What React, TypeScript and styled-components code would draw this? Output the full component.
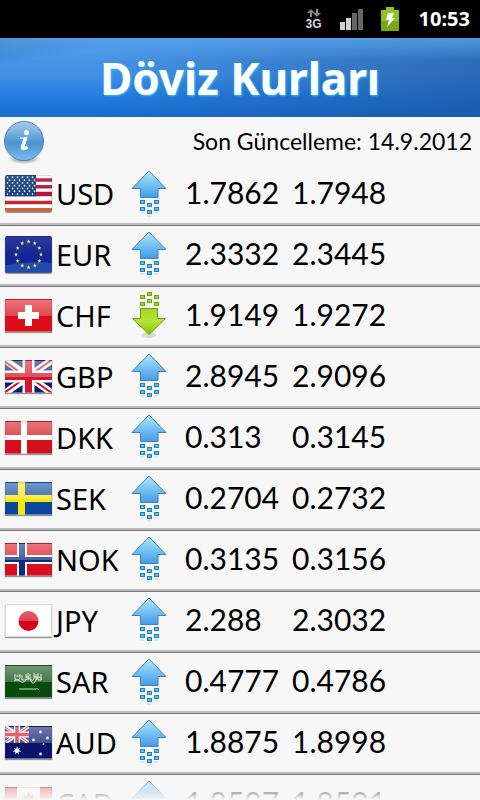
import React, { useId } from "react";
import styled, { createGlobalStyle } from "styled-components";

const GlobalStyle = createGlobalStyle`
  *, *::before, *::after { box-sizing: border-box; }
  body { margin: 0; background: #f7f7f7; color: #000; }
`;

const Screen = styled.div`
  display: flex;
  flex-direction: column;
  height: 100vh;
  overflow: hidden;
  background: #f7f7f7;
`;

const StatusBar = styled.div`
  display: flex;
  flex: none;
  align-items: center;
  justify-content: flex-end;
  height: 38px;
  padding-right: 10px;
  background: #000;
  color: #fff;
`;

const Network = styled.div`
  display: flex;
  flex-direction: column;
  align-items: center;
  width: 16px;
  margin-right: 18px;
  color: #d6d6d6;
  font: bold 12px/12px "Liberation Sans", sans-serif;
`;

const Signal = styled.svg`
  margin-right: 17px;
`;

const Battery = styled.svg`
  margin-right: 20px;
`;

const Clock = styled.time`
  font: bold 20px/38px "Noto Sans", "Open Sans", sans-serif;
`;

const Header = styled.header`
  flex: none;
  height: 79px;
  background:
    linear-gradient(to bottom, rgba(92, 170, 240, 0.7), rgba(80, 150, 225, 0) 24px),
    linear-gradient(172deg, rgba(16, 62, 130, 0.45), rgba(16, 62, 130, 0) 26px),
    linear-gradient(to right, rgba(26, 80, 150, 0) 20%, rgba(26, 80, 150, 0.6)),
    linear-gradient(to bottom, #4a98e6, #4390e6 45%, #1f78de 80%, #1c6ccc);
  text-align: center;
`;

const Title = styled.h1`
  margin: 0;
  color: #fff;
  font: bold 44px/80px "Noto Sans", "Open Sans", sans-serif;
  text-shadow: 1px 1px 2px #25c5ff;
`;

const InfoBar = styled.div`
  display: flex;
  flex: none;
  align-items: center;
  justify-content: space-between;
  height: 48px;
  padding: 0 8px 0 4px;
`;

const InfoButton = styled.button`
  display: flex;
  align-items: flex-end;
  height: 48px;
  padding: 0;
  border: 0;
  background: none;
`;

const Updated = styled.p`
  margin: 0;
  font: 400 23px/48px Lato, sans-serif;
`;

const ListArea = styled.main`
  position: relative;
  flex: 1;
  min-height: 0;

  &::after {
    content: "";
    position: absolute;
    right: 0;
    bottom: 0;
    left: 0;
    height: 26px;
    background: linear-gradient(to bottom, rgba(247, 247, 247, 0), #f7f7f7);
    pointer-events: none;
  }
`;

const Scroller = styled.div`
  height: 100%;
  overflow-y: auto;
  scrollbar-width: none;
`;

const RateTable = styled.table`
  display: block;
  width: 100%;
`;

const RateBody = styled.tbody`
  display: block;
`;

const RateRow = styled.tr`
  display: grid;
  grid-template-columns: 51px 75px 54px 107px 1fr;
  align-items: center;
  height: 61px;
  padding: 0 0 3px 5px;
  border-bottom: 1px solid #777;
  box-shadow: inset 0 -2px #bcbcbc;
`;

const IconCell = styled.td`
  display: flex;
  padding: 0;
`;

const Code = styled.th`
  padding: 0;
  font: 400 29px/56px "Noto Sans", "Open Sans", sans-serif;
  text-align: left;
`;

const Rate = styled.td`
  align-self: start;
  padding: 0;
  font: 400 30px/54px Lato, sans-serif;
`;

const FlagFrame = styled.span<{ $tall?: boolean }>`
  position: relative;
  display: block;
  width: 47px;
  height: ${(p) => (p.$tall ? 37 : 33)}px;
  overflow: hidden;
  border-radius: ${(p) => (p.$tall ? 2 : 0)}px;
  box-shadow: 0 1px 1px rgba(0, 0, 0, 0.4);

  > svg {
    display: block;
    width: 100%;
    height: 100%;
  }

  &::after {
    content: "";
    position: absolute;
    inset: 0;
    border: 1px solid rgba(80, 80, 80, 0.2);
    background: linear-gradient(to bottom, rgba(255, 255, 255, ${(p) => (p.$tall ? 0.1 : 0.42)}), rgba(255, 255, 255, ${(p) => (p.$tall ? 0 : 0.25)}) 50%, transparent 52%);
  }
`;

const starPoints = (cx: number, cy: number, r: number, n = 5, inner = 0.42) =>
  Array.from({ length: n * 2 }, (_, i) => {
    const a = (i * Math.PI) / n - Math.PI / 2;
    const d = i % 2 ? r * inner : r;
    return `${cx + d * Math.cos(a)},${cy + d * Math.sin(a)}`;
  }).join(" ");

const UnionJack = () => (
  <>
    <path fill="#0b1a6e" d="M0 0h47v33H0z" />
    <path stroke="#fff" strokeWidth="7" d="M0 0l47 33M47 0L0 33" />
    <path stroke="#d5152b" strokeWidth="2" d="M-1 1l24 17M48-1L24 16M-1 33l24-17M24 17l24 17" />
    <path stroke="#fff" strokeWidth="12" d="M23.500 0v33M0 16.500h47" />
    <path stroke="#d5152b" strokeWidth="7" d="M23.500 0v33M0 16.500h47" />
  </>
);

const Cross = ({ field, outer, inner }: { field: string; outer: string; inner?: string }) => (
  <>
    <path fill={field} d="M0 0h47v33H0z" />
    <path fill={outer} d={inner ? "M12 0h10v33H12zM0 12h47v9H0z" : "M16 0h6v33h-6zM0 14h47v5H0z"} />
    {inner && <path fill={inner} d="M14 0h6v33h-6zM0 14h47v5H0z" />}
  </>
);

const flags: Record<string, React.ReactNode> = {
  USD: (
    <>
      <path fill="#fff" d="M0 0h47v33H0z" />
      <path fill="#b0173f" d="M0 3h47v3H0zM0 9h47v3H0zM0 15h47v4H0z" />
      <path fill="#c5262f" d="M0 23h47v3H0z" />
      <path fill="#c9683f" d="M0 29.500h47V33H0z" />
      <path fill="#16407c" d="M0 0h31v19H0z" />
      {Array.from({ length: 7 }, (_, y) =>
        Array.from({ length: 6 }, (_, x) => (
          <circle key={`${x}-${y}`} cx={2.500 + x * 5 + (y % 2) * 2} cy={2 + y * 2.500} r="0.800" fill="#fff" />
        ))
      )}
    </>
  ),
  EUR: (
    <>
      <path fill="#142494" d="M0 0h47v33H0z" />
      <path fill="#2d65c0" opacity="0.600" d="M0 26q24-4 47-2v9H0z" />
      {Array.from({ length: 12 }, (_, i) => (
        <polygon
          key={i}
          points={starPoints(23.500 + 12.500 * Math.sin((i * Math.PI) / 6), 16.500 - 11.500 * Math.cos((i * Math.PI) / 6), 2.100)}
          fill="#e4e84c"
        />
      ))}
    </>
  ),
  CHF: (
    <>
      <path fill="#dc0d17" d="M0 0h47v33H0z" />
      <path fill="#fff" d="M20 6h7v7h7v7h-7v7h-7v-7h-7v-7h7z" />
    </>
  ),
  GBP: <UnionJack />,
  DKK: <Cross field="#d4101c" outer="#fff" />,
  SEK: (
    <>
      <path fill="#08489c" d="M0 0h47v33H0z" />
      <path fill="#fbe60c" d="M13 0h7v33h-7zM0 13h47v7H0z" />
    </>
  ),
  NOK: <Cross field="#dc0d1c" outer="#fff" inner="#0a2a80" />,
  JPY: (
    <>
      <path fill="#fff" d="M0 0h47v33H0z" />
      <circle cx="23.500" cy="17" r="10" fill="#d4051b" />
    </>
  ),
  SAR: (
    <>
      <path fill="#064d0c" d="M0 0h47v33H0z" />
      <g fill="none" stroke="#e4eee4" strokeWidth="0.900">
        <path d="M10 9v5q3 3 5-1V9m2 1v5h4V9m2-1v7m2-6v5q3 3 4 0V8m2 1v6m2-7v7h3V9" />
        <path d="M9 16q3-3 6 0t6-1 5 1 5-1 6 0M11 11h4m6 1h3m5 0h4" />
        <path d="M14 24h19l1 1" />
      </g>
    </>
  ),
  AUD: (
    <>
      <path fill="#08146c" d="M0 0h47v33H0z" />
      <svg width="24" height="17" viewBox="0 0 47 33" preserveAspectRatio="none">
        <UnionJack />
      </svg>
      <polygon points={starPoints(12, 24.500, 4.500, 7)} fill="#fff" />
      {[[35.500, 6], [28.500, 14], [42.500, 12], [35.500, 28]].map(([x, y]) => (
        <polygon key={`${x}-${y}`} points={starPoints(x, y, 2, 7, 0.500)} fill="#fff" />
      ))}
      <circle cx="38.500" cy="18" r="0.900" fill="#fff" />
    </>
  ),
  CAD: (
    <>
      <path fill="#fff" d="M0 0h47v33H0z" />
      <path fill="#d80d1c" d="M0 0h12v33H0zM35 0h12v33H35z" />
      <path fill="#d80d1c" d="M23.500 5l2 4 3-1-1 6 4-3 1 2h3l-2 5 1 2-7 4h-3v4h-2v-4h-3l-6-4 1-2-3-5h4l1-2 3 3-1-6 3 1z" />
    </>
  ),
};

const Flag = ({ code }: { code: string }) => (
  <FlagFrame $tall={code === "USD" || code === "EUR"}>
    <svg viewBox="0 0 47 33" preserveAspectRatio="none" aria-hidden="true">
      {flags[code]}
    </svg>
  </FlagFrame>
);

const UP_DOTS = [[9, 30], [23, 30], [16, 33], [9, 37], [23, 37], [16, 40]];
const DOWN_DOTS = [[16, 0], [9, 3], [23, 3], [16, 7], [9, 10], [23, 10]];

const Trend = ({ down }: { down?: boolean }) => {
  const id = useId();
  const stroke = down ? "#6f9c12" : "#3f83b8";
  return (
    <svg width="36" height="48" viewBox="0 0 36 48" role="img" aria-label={down ? "Düştü" : "Yükseldi"}>
      <defs>
        <linearGradient id={id} x2="0" y2="1">
          <stop offset="0" stopColor={down ? "#a5d426" : "#b4e7fb"} />
          <stop offset="0.500" stopColor={down ? "#b5e336" : "#76c2f2"} />
          <stop offset="1" stopColor={down ? "#83bd0c" : "#459be7"} />
        </linearGradient>
      </defs>
      {down && <ellipse cx="18" cy="43" rx="7" ry="3" fill="#6f9c12" opacity="0.250" />}
      <path
        d={down ? "M9.500 16.500h17v10h8L18 42.500 1.500 26.500h8z" : "M18 1L35 18.500h-8v9H9.500v-9H1z"}
        fill={`url(#${id})`}
        stroke={stroke}
      />
      {(down ? DOWN_DOTS : UP_DOTS).map(([x, y]) => (
        <rect
          key={`${x}-${y}`}
          x={x + 0.500}
          y={y + 0.500}
          width="4"
          height="3"
          fill={down ? "#a0d42c" : "#5cbcf0"}
          stroke={down ? "#6fa80c" : "#1d83c0"}
        />
      ))}
      {!down && <path d="M9 43h4M23 43h4M16 46h4" stroke="#1d83c0" opacity="0.250" />}
    </svg>
  );
};

const InfoIcon = () => (
  <svg width="40" height="44" viewBox="0 0 40 44" aria-hidden="true">
    <defs>
      <linearGradient id="info-face" x2="0" y2="1">
        <stop offset="0" stopColor="#a8cdea" />
        <stop offset="0.450" stopColor="#5d9fd8" />
        <stop offset="0.550" stopColor="#4a92d2" />
        <stop offset="1" stopColor="#7dbdee" />
      </linearGradient>
      <radialGradient id="info-shadow">
        <stop offset="0.300" stopColor="#555" stopOpacity="0.600" />
        <stop offset="1" stopColor="#555" stopOpacity="0" />
      </radialGradient>
    </defs>
    <ellipse cx="20" cy="38" rx="16" ry="5" fill="url(#info-shadow)" />
    <circle cx="20" cy="20" r="19.500" fill="url(#info-face)" stroke="#4f86b5" />
    <circle cx="22.500" cy="11.500" r="2.500" fill="#fff" />
    <path d="M16 17q4 1 7-1l-3 10q0 2 3 0" fill="none" stroke="#fff" strokeWidth="1" />
    <path d="M21.500 16.500l-3 9.500q0 3 5 0" fill="none" stroke="#fff" strokeWidth="3.500" />
  </svg>
);

const rates = [
  { code: "USD", buy: "1.7862", sell: "1.7948" },
  { code: "EUR", buy: "2.3332", sell: "2.3445" },
  { code: "CHF", buy: "1.9149", sell: "1.9272", down: true },
  { code: "GBP", buy: "2.8945", sell: "2.9096" },
  { code: "DKK", buy: "0.313", sell: "0.3145" },
  { code: "SEK", buy: "0.2704", sell: "0.2732" },
  { code: "NOK", buy: "0.3135", sell: "0.3156" },
  { code: "JPY", buy: "2.288", sell: "2.3032" },
  { code: "SAR", buy: "0.4777", sell: "0.4786" },
  { code: "AUD", buy: "1.8875", sell: "1.8998" },
  { code: "CAD", buy: "1.8507", sell: "1.8591" },
];

export default function App() {
  return (
    <Screen>
      <GlobalStyle />
      <StatusBar>
        <Network>
          <svg width="14" height="9" viewBox="0 0 14 9" aria-hidden="true">
            <path d="M4 0l4 4H5v4H3V4H0zM9 0h2v4h3l-4 4-4-4h3z" fill="#858585" />
          </svg>
          3G
        </Network>
        <Signal width="24" height="22" viewBox="0 0 24 22" aria-hidden="true">
          <path fill="#d0d0d0" d="M0 14h5v8H0zM6 10h5v12H6z" />
          <path fill="#666" d="M12 5h5v17h-5zM18 1h5v21h-5z" />
        </Signal>
        <Battery width="18" height="24" viewBox="0 0 18 24" aria-hidden="true">
          <path fill="#8fc31c" d="M0 3h5V0h8v3h5v21H0z" />
          <path fill="#76a812" d="M0 14h18v10H0z" />
          <path fill="#fff" d="M7 6h6l-2 5h3L6 20l2-7H5z" />
        </Battery>
        <Clock>10:53</Clock>
      </StatusBar>
      <Header>
        <Title>Döviz Kurları</Title>
      </Header>
      <InfoBar>
        <InfoButton type="button" aria-label="Bilgi">
          <InfoIcon />
        </InfoButton>
        <Updated>Son Güncelleme: 14.9.2012</Updated>
      </InfoBar>
      <ListArea>
        <Scroller>
          <RateTable>
            <RateBody>
              {rates.map((r) => (
                <RateRow key={r.code}>
                  <IconCell>
                    <Flag code={r.code} />
                  </IconCell>
                  <Code scope="row">{r.code}</Code>
                  <IconCell>
                    <Trend down={r.down} />
                  </IconCell>
                  <Rate>{r.buy}</Rate>
                  <Rate>{r.sell}</Rate>
                </RateRow>
              ))}
            </RateBody>
          </RateTable>
        </Scroller>
      </ListArea>
    </Screen>
  );
}
